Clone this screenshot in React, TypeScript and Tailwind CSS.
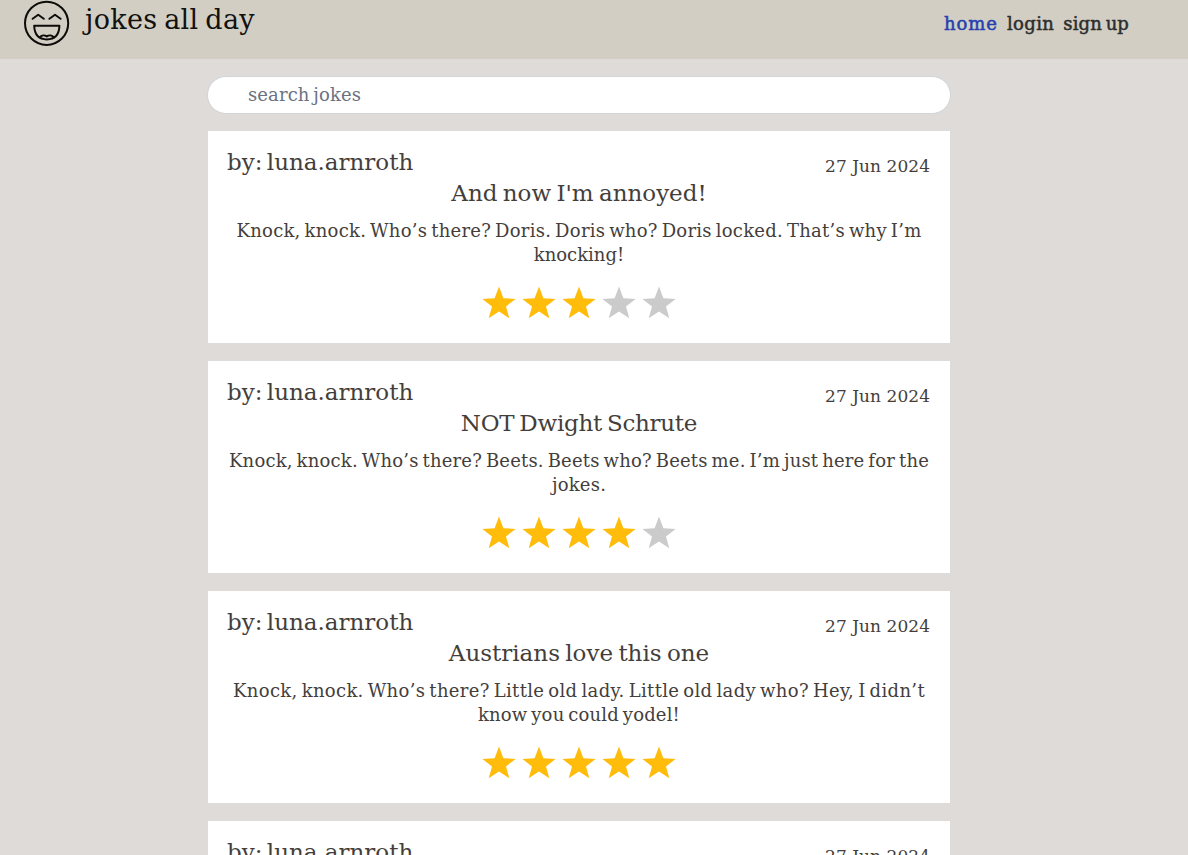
type Line = { text: string; tracking: string };
type Joke = { title: Line; lines: Line[]; rating: number };

const jokes: Joke[] = [
  {
    title: { text: "And now I'm annoyed!", tracking: "" },
    lines: [
      {
        text: "Knock, knock. Who’s there? Doris. Doris who? Doris locked. That’s why I’m",
        tracking: "tracking-[0.25px]",
      },
      { text: "knocking!", tracking: "" },
    ],
    rating: 3,
  },
  {
    title: { text: "NOT Dwight Schrute", tracking: "tracking-[-0.28px]" },
    lines: [
      {
        text: "Knock, knock. Who’s there? Beets. Beets who? Beets me. I’m just here for the",
        tracking: "tracking-[0.19px]",
      },
      { text: "jokes.", tracking: "tracking-[0.2px]" },
    ],
    rating: 4,
  },
  {
    title: { text: "Austrians love this one", tracking: "" },
    lines: [
      {
        text: "Knock, knock. Who’s there? Little old lady. Little old lady who? Hey, I didn’t",
        tracking: "tracking-[0.33px]",
      },
      { text: "know you could yodel!", tracking: "tracking-[0.17px]" },
    ],
    rating: 5,
  },
];

function Star({ filled }: { filled: boolean }) {
  return (
    <svg viewBox="0 0 40 40" className={`size-10 ${filled ? "fill-[#ffbc0b]" : "fill-[#cbcbcb]"}`}>
      <path d="M20 3.6L24.4 15.3L36.6 15.9L27 23.4L30.3 35.3L20 28.5L9.7 35.3L13 23.4L3.4 15.9L15.6 15.3Z" />
    </svg>
  );
}

function Logo() {
  return (
    <svg
      viewBox="0 0 46 46"
      className="size-[46px]"
      fill="none"
      stroke="#0c0c0a"
      strokeWidth="2"
      strokeLinecap="round"
      strokeLinejoin="round"
    >
      <circle cx="22.6" cy="23.3" r="21.6" />
      <path d="M8.6 18.8l5.6-4 5.6 4M25.4 18.8l5.6-4 5.6 4" />
      <path d="M10.2 25.8H35.4C35.2 34.6 31.1 39.4 22.8 39.4S10.5 34.6 10.2 25.8Z" />
      <path d="M15.8 37.4c1.6-2.2 4.7-2.5 7-1 2.3-1.5 5.4-1.2 7 1" />
    </svg>
  );
}

function CardHeader() {
  return (
    <div className="flex h-8 justify-between">
      <span className="text-[23px] leading-8 [word-spacing:-3px]">by: luna.arnroth</span>
      <span className="mt-2 mr-px text-[17px] leading-6 tracking-[0.05px]">27 Jun 2024</span>
    </div>
  );
}

function JokeCard({ joke }: { joke: Joke }) {
  return (
    <article className="h-[212px] shrink-0 bg-white px-[19px] pt-[15px]">
      <CardHeader />
      <h2 className={`-mt-px text-center text-[23px] leading-8 [word-spacing:-2px] ${joke.title.tracking}`}>
        {joke.title.text}
      </h2>
      <p className="mt-2.5 text-center text-lg leading-6 [word-spacing:-2px]">
        {joke.lines.map((line) => (
          <span key={line.text} className={`block whitespace-nowrap ${line.tracking}`}>
            {line.text}
          </span>
        ))}
      </p>
      <div className="mt-4 flex justify-center">
        {[1, 2, 3, 4, 5].map((n) => (
          <Star key={n} filled={n <= joke.rating} />
        ))}
      </div>
    </article>
  );
}

export default function App() {
  return (
    <div className="flex h-screen flex-col overflow-hidden bg-[#dfdbd8] font-['DejaVu_Serif',serif] text-[#443e3b]">
      <header className="flex h-[59px] shrink-0 justify-between bg-[#d3cec3] pr-[59px] pl-6">
        <div className="flex gap-[15px] text-[#11110f]">
          <Logo />
          <h1 className="mt-1 text-[27px] leading-8 tracking-[0.3px] [word-spacing:-2px]">jokes all day</h1>
        </div>
        <nav className="mt-3 flex gap-[9px] text-lg leading-6 text-[#2b2e2f] [-webkit-text-stroke:0.5px_currentColor]">
          <a href="#" className="tracking-[0.9px] text-[#2440b0]">home</a>
          <a href="#" className="tracking-[0.4px]">login</a>
          <a href="#" className="tracking-[0.1px] [word-spacing:-2px]">sign up</a>
        </nav>
      </header>
      <main className="ml-[207px] flex w-[744px] flex-col gap-[17px] pt-[17px]">
        <input
          type="search"
          placeholder="search jokes"
          className="h-[38px] shrink-0 rounded-full border border-[#d0d5da] bg-white px-10 pb-0.5 text-lg tracking-[0.1px] outline-none [word-spacing:-2px] placeholder:text-[#6b7280]"
        />
        <div className="flex flex-col gap-[18px] px-px">
          {jokes.map((joke) => (
            <JokeCard key={joke.title.text} joke={joke} />
          ))}
          <article className="h-[212px] shrink-0 bg-white px-[19px] pt-[15px]">
            <CardHeader />
          </article>
        </div>
      </main>
    </div>
  );
}
